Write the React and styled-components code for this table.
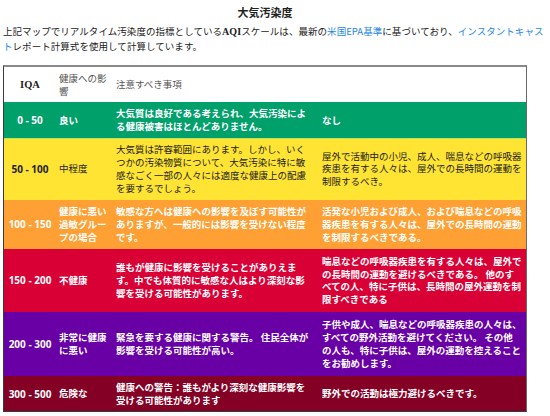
import React from "react";
import styled, { createGlobalStyle } from "styled-components";

const Global = createGlobalStyle`
  html, body { margin: 0; padding: 0; background: #fff; }
  body { font-family: "Noto Sans CJK JP", "Noto Sans", sans-serif; color: #222; }
`;

const Page = styled.div`
  padding: 4px 0 0 3px;
  width: 547px;
`;

const Title = styled.h2`
  margin: 0;
  width: 524px;
  text-align: center;
  font-size: 11px;
  line-height: 16px;
  font-weight: 700;
  color: #222;
`;

const Intro = styled.p`
  margin: 4px 0 0;
  width: 543px;
  font-size: 9.5px;
  line-height: 14px;
  color: #222;
  letter-spacing: 0.05px;
  b { font-family: "Liberation Serif", serif; font-weight: 700; font-size: 10px; }
`;

const Link = styled.span`
  color: #1e88e5;
`;

const Table = styled.div`
  margin-top: 12px;
  width: 522px;
  border: 1px solid #3a3a3a;
  border-top: 2px solid #8a8a8a;
  border-right-color: #6a6a6a;
`;

const Row = styled.div`
  display: grid;
  grid-template-columns: 52px 57px 205px 208px;
  background: ${(p) => p.$bg};
  color: ${(p) => p.$fg};
  font-weight: ${(p) => p.$weight};
  min-height: ${(p) => p.$min || 0}px;
  box-shadow: ${(p) => (p.$line ? `inset 0 1px 0 ${p.$line}` : "none")};
`;

const Cell = styled.div`
  align-self: center;
  padding: ${(p) => p.$pad || "5px 1px 5px 3px"};
  font-size: 9.5px;
  line-height: 12.7px;
  white-space: nowrap;
`;

const NumCell = styled.div`
  align-self: center;
  text-align: center;
  font-family: "Open Sans", "Lato", sans-serif;
  font-weight: 700;
  font-size: 10px;
  line-height: 12px;
  white-space: nowrap;
`;

const HeadNum = styled(NumCell)`
  font-family: "Liberation Serif", serif;
  font-size: 10.5px;
  color: #222;
`;

const HeadCell = styled(Cell)`
  color: #555;
  font-weight: 400;
`;

const Lines = ({ lines }) =>
  lines.map((l, i) => (
    <React.Fragment key={i}>
      {i > 0 && <br />}
      {l}
    </React.Fragment>
  ));

const rows = [
  {
    range: "0 - 50",
    bg: "#00a06b",
    fg: "#fff",
    w: 700,
    name: ["良い"],
    desc: ["大気質は良好である考えられ、大気汚染によ", "る健康被害はほとんどありません。"],
    adv: ["なし"],
    min: 35,
  },
  {
    range: "50 - 100",
    bg: "#ffe433",
    fg: "#222",
    w: 400,
    line: "#b8e65a",
    name: ["中程度"],
    desc: [
      "大気質は許容範囲にあります。しかし、いく",
      "つかの汚染物質について、大気汚染に特に敏",
      "感なごく一部の人々には適度な健康上の配慮",
      "を要するでしょう。",
    ],
    adv: [
      "屋外で活動中の小児、成人、喘息などの呼吸器",
      "疾患を有する人々は、屋外での長時間の運動を",
      "制限するべき。",
    ],
    min: 62,
  },
  {
    range: "100 - 150",
    bg: "#ffa034",
    fg: "#fff",
    w: 700,
    name: ["健康に悪い", "過敏グルー", "プの場合"],
    desc: [
      "敏感な方へは健康への影響を及ぼす可能性が",
      "ありますが、一般的には影響を受けない程度",
      "です。",
    ],
    adv: [
      "活発な小児および成人、および喘息などの呼吸",
      "器疾患を有する人々は、屋外での長時間の運動",
      "を制限するべきである。",
    ],
    min: 49,
  },
  {
    range: "150 - 200",
    bg: "#d90036",
    fg: "#fff",
    w: 700,
    name: ["不健康"],
    desc: [
      "誰もが健康に影響を受けることがありえま",
      "す。中でも体質的に敏感な人はより深刻な影",
      "響を受ける可能性があります。",
    ],
    adv: [
      "喘息などの呼吸器疾患を有する人々は、屋外で",
      "の長時間の運動を避けるべきである。 他のす",
      "べての人、特に子供は、長時間の屋外運動を制",
      "限すべきである",
    ],
    min: 63,
  },
  {
    range: "200 - 300",
    bg: "#6800a6",
    fg: "#fff",
    w: 700,
    name: ["非常に健康", "に悪い"],
    desc: ["緊急を要する健康に関する警告。 住民全体が", "影響を受ける可能性が高い。"],
    adv: [
      "子供や成人、喘息などの呼吸器疾患の人々は、",
      "すべての野外活動を避けてください。 その他",
      "の人も、特に子供は、屋外の運動を控えること",
      "をお勧めします。",
    ],
    min: 64,
  },
  {
    range: "300 - 500",
    bg: "#840024",
    fg: "#fff",
    w: 700,
    name: ["危険な"],
    desc: ["健康への警告：誰もがより深刻な健康影響を", "受ける可能性があります"],
    adv: ["野外での活動は極力避けるべきです。"],
    min: 34,
  },
];

export default function App() {
  return (
    <>
      <Global />
      <Page>
        <Title>大気汚染度</Title>
        <Intro>
          上記マップでリアルタイム汚染度の指標としている<b>AQI</b>スケールは、最新の
          <Link>米国EPA基準</Link>に基づいており、<Link>インスタントキャスト</Link>
          レポート計算式を使用して計算しています。
        </Intro>
        <Table>
          <Row $bg="#fff" $fg="#222" $weight={400} $min={33}>
            <HeadNum>IQA</HeadNum>
            <HeadCell>
              <Lines lines={["健康への影", "響"]} />
            </HeadCell>
            <HeadCell>注意すべき事項</HeadCell>
            <HeadCell />
          </Row>
          {rows.map((r) => (
            <Row key={r.range} $bg={r.bg} $fg={r.fg} $weight={r.w} $min={r.min} $line={r.line}>
              <NumCell>{r.range}</NumCell>
              <Cell>
                <Lines lines={r.name} />
              </Cell>
              <Cell>
                <Lines lines={r.desc} />
              </Cell>
              <Cell $pad="5px 1px 5px 4px">
                <Lines lines={r.adv} />
              </Cell>
            </Row>
          ))}
        </Table>
      </Page>
    </>
  );
}
